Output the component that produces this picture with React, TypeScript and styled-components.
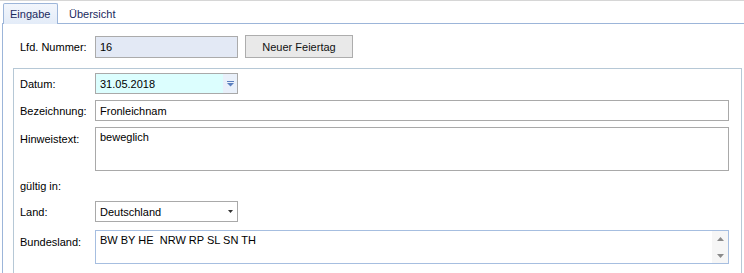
import React from 'react';
import styled, { createGlobalStyle } from 'styled-components';

const GlobalStyle = createGlobalStyle`
  html, body {
    margin: 0;
    padding: 0;
    background: #fff;
  }
  body {
    font-family: 'Liberation Sans', Arial, sans-serif;
    font-size: 11px;
    color: #000;
  }
`;

const Window = styled.div`
  width: 744px;
  height: 273px;
  overflow: hidden;
  border-top: 1px solid #d6d6d6;
  box-sizing: border-box;
  background: #fff;
`;

const TabStrip = styled.div`
  display: flex;
  align-items: flex-end;
  height: 22px;
  padding-left: 3px;
`;

const Tab = styled.div<{ $active?: boolean }>`
  height: ${(p) => (p.$active ? '21px' : '19px')};
  box-sizing: border-box;
  display: flex;
  align-items: center;
  color: #1b2a5e;
  border: 1px solid ${(p) => (p.$active ? '#9cb5d9' : 'transparent')};
  border-bottom: none;
  border-radius: 2px 2px 0 0;
  background: ${(p) => (p.$active ? 'linear-gradient(#f2f6fc, #e3ecf8)' : '#fff')};
  margin-bottom: ${(p) => (p.$active ? '-1px' : '0')};
  position: relative;
  z-index: ${(p) => (p.$active ? 1 : 0)};
  width: ${(p) => (p.$active ? '55px' : 'auto')};
  padding: 0 6px 0 ${(p) => (p.$active ? '6px' : '10px')};
`;

const Panel = styled.div`
  margin-left: 2px;
  width: 780px;
  height: 260px;
  border-left: 1px solid #9cb5d9;
  border-top: 1px solid #9cb5d9;
  box-sizing: border-box;
  padding-top: 11px;
`;

const TopRow = styled.div`
  display: flex;
  align-items: center;
  padding-left: 17px;
`;

const Label = styled.div<{ $top?: boolean }>`
  width: 75px;
  flex: none;
  align-self: ${(p) => (p.$top ? 'flex-start' : 'center')};
  padding-top: ${(p) => (p.$top ? '6px' : '0')};
`;

const ReadOnlyBox = styled.div`
  width: 143px;
  height: 22px;
  box-sizing: border-box;
  border: 1px solid #ababab;
  background: #e3e9f5;
  display: flex;
  align-items: center;
  padding-left: 4px;
`;

const Button = styled.div`
  margin-left: 7px;
  width: 108px;
  height: 23px;
  box-sizing: border-box;
  border: 1px solid #adadad;
  background: #e9e9e9;
  display: flex;
  align-items: center;
  justify-content: center;
  color: #111;
`;

const GroupBox = styled.div`
  margin-top: 10px;
  margin-left: 10px;
  width: 729px;
  height: 240px;
  box-sizing: border-box;
  border: 1px solid #b6c8d6;
  padding: 4px 12px 0 6px;
  display: flex;
  flex-direction: column;
`;

const Row = styled.div<{ $gap?: number }>`
  display: flex;
  margin-top: ${(p) => p.$gap ?? 0}px;
`;

const Combo = styled.div<{ $bg: string }>`
  width: 143px;
  height: 21px;
  box-sizing: border-box;
  border: 1px solid #a9a9a9;
  background: ${(p) => p.$bg};
  display: flex;
  align-items: center;
`;

const ComboText = styled.div`
  flex: 1;
  padding-left: 4px;
`;

const DropButton = styled.div<{ $blue?: boolean }>`
  width: 14px;
  height: 100%;
  display: flex;
  align-items: center;
  justify-content: center;
  background: ${(p) => (p.$blue ? '#e9f0fa' : 'transparent')};
`;

const TextBox = styled.div<{ $h: number; $blue?: boolean }>`
  flex: 1;
  height: ${(p) => p.$h}px;
  box-sizing: border-box;
  border: 1px solid ${(p) => (p.$blue ? '#a6bee0' : '#a9a9a9')};
  background: #fff;
  display: flex;
  align-items: ${(p) => (p.$h > 30 ? 'flex-start' : 'center')};
  padding-left: 4px;
  padding-top: ${(p) => (p.$h > 30 ? '3px' : '0')};
  white-space: pre;
`;

const MultiText = styled.div`
  flex: 1;
`;

const ScrollBar = styled.div`
  width: 16px;
  align-self: stretch;
  margin-top: -3px;
  background: #f6f6f6;
  display: flex;
  flex-direction: column;
  justify-content: space-between;
  align-items: center;
  padding: 6px 0 5px;
  box-sizing: border-box;
`;

const Section = styled.div`
  margin-top: 9px;
  height: 14px;
`;

const BlueArrow = () => (
  <svg width="9" height="6" viewBox="0 0 9 6">
    <rect x="1" y="0" width="7" height="1" fill="#5b7fbf" />
    <path d="M1 2 H8 L4.5 5.5 Z" fill="#5b7fbf" />
  </svg>
);

const SmallArrow = ({ up }: { up?: boolean }) => (
  <svg width="7" height="4" viewBox="0 0 7 4">
    <path d={up ? 'M0 4 H7 L3.5 0 Z' : 'M0 0 H7 L3.5 4 Z'} fill="#8a8a8a" />
  </svg>
);

const DarkArrow = () => (
  <svg width="5" height="3" viewBox="0 0 5 3">
    <path d="M0 0 H5 L2.5 3 Z" fill="#333" />
  </svg>
);

export default function App() {
  return (
    <Window>
      <GlobalStyle />
      <TabStrip>
        <Tab $active>Eingabe</Tab>
        <Tab>Übersicht</Tab>
      </TabStrip>
      <Panel>
        <TopRow>
          <Label>Lfd. Nummer:</Label>
          <ReadOnlyBox>16</ReadOnlyBox>
          <Button>Neuer Feiertag</Button>
        </TopRow>
        <GroupBox>
          <Row>
            <Label>Datum:</Label>
            <Combo $bg="#dcfefe">
              <ComboText>31.05.2018</ComboText>
              <DropButton $blue>
                <BlueArrow />
              </DropButton>
            </Combo>
          </Row>
          <Row $gap={6}>
            <Label>Bezeichnung:</Label>
            <TextBox $h={21}>Fronleichnam</TextBox>
          </Row>
          <Row $gap={6}>
            <Label $top>Hinweistext:</Label>
            <TextBox $h={44}>beweglich</TextBox>
          </Row>
          <Section>gültig in:</Section>
          <Row $gap={7}>
            <Label>Land:</Label>
            <Combo $bg="#fff">
              <ComboText>Deutschland</ComboText>
              <DropButton>
                <DarkArrow />
              </DropButton>
            </Combo>
          </Row>
          <Row $gap={8}>
            <Label $top>Bundesland:</Label>
            <TextBox $h={34} $blue>
              <MultiText>BW BY HE  NRW RP SL SN TH</MultiText>
              <ScrollBar>
                <SmallArrow up />
                <SmallArrow />
              </ScrollBar>
            </TextBox>
          </Row>
        </GroupBox>
      </Panel>
    </Window>
  );
}
